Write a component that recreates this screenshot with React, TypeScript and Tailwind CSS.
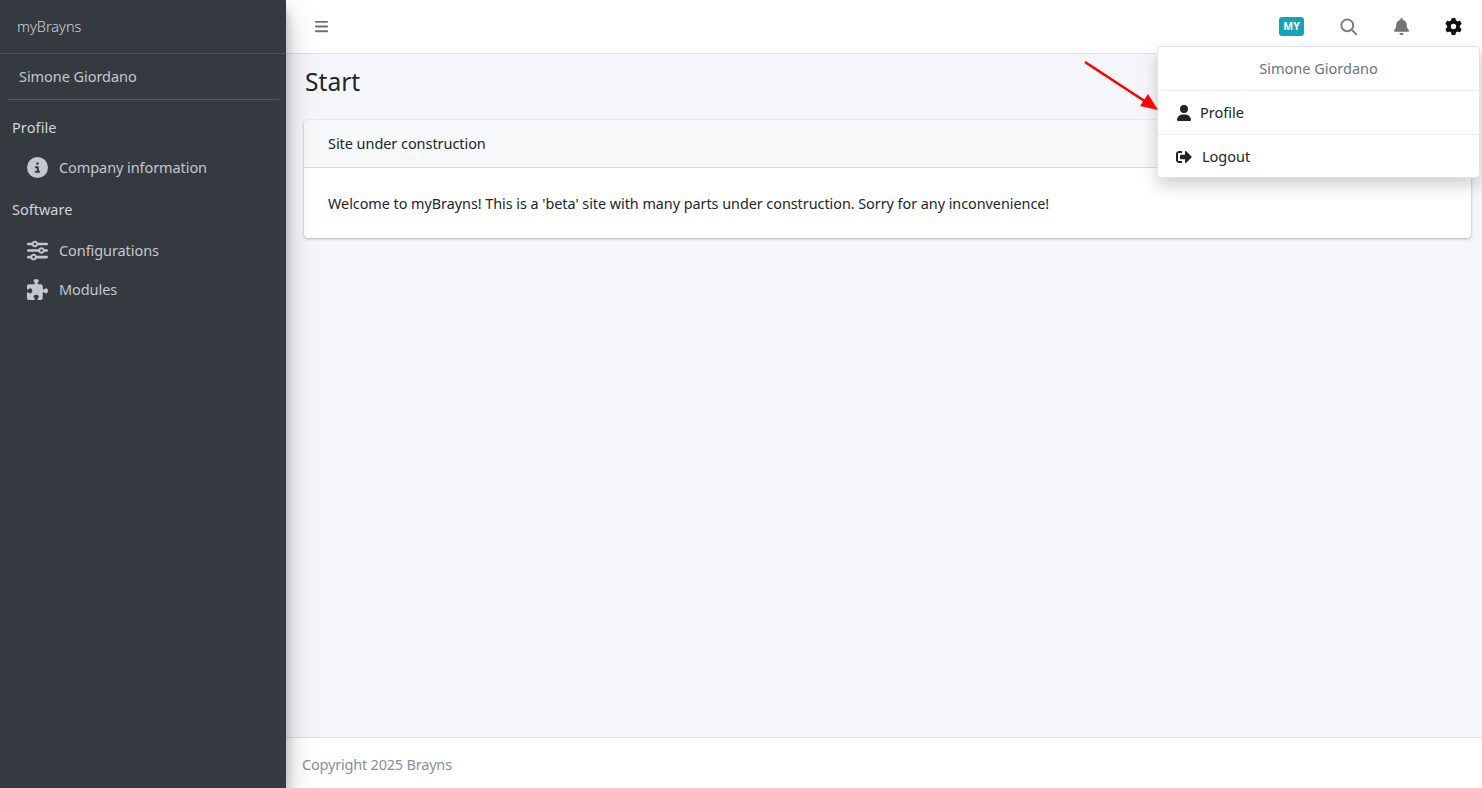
import {FaBars, FaBell, FaCircleInfo, FaGear, FaPuzzlePiece, FaSliders, FaUser} from "react-icons/fa6";
import {FaSignOutAlt} from "react-icons/fa";

const font = {fontFamily: '"Noto Sans", sans-serif'};

function NavItem({icon, label}: { icon: React.ReactNode, label: string }) {
  return (
    <div className="flex h-[39px] items-center pl-[27px] text-[#c2c7d0]">
      <span className="flex w-[21px] justify-center text-[21px]">{icon}</span>
      <span className="ml-[11px] text-[14.5px] tracking-[-0.08px]">{label}</span>
    </div>
  );
}

export default function App() {
  return (
    <div style={font} className="relative flex h-[788px] w-[1482px] overflow-hidden bg-[#f4f6f9] text-[14.5px] text-[#212529]">
      <aside className="z-10 w-[286px] shrink-0 bg-[#343a40] shadow-[0_14px_28px_rgba(0,0,0,0.25),0_10px_10px_rgba(0,0,0,0.22)]">
        <div className="flex h-[54px] items-center border-b border-[#4b545c] pl-[17px] font-light text-[#d1d5db]">myBrayns</div>
        <div className="mx-[7px] flex h-[46px] items-center border-b border-[#4f5962] pl-[12px] tracking-[-0.06px] text-[#c2c7d0]">Simone Giordano</div>
        <div className="pl-[12px] pt-[17px] pb-[11px] leading-[20px] tracking-[0.1px] text-[#d0d4db]">Profile</div>
        <NavItem icon={<FaCircleInfo />} label="Company information" />
        <div className="pl-[12px] pt-[12px] pb-[12px] leading-[20px] text-[#d0d4db]">Software</div>
        <NavItem icon={<FaSliders />} label="Configurations" />
        <NavItem icon={<FaPuzzlePiece />} label="Modules" />
      </aside>

      <div className="flex min-w-0 flex-1 flex-col">
        <header className="flex h-[54px] shrink-0 items-center border-b border-[#dee2e6] bg-white pl-[28px] pr-[20px] text-[#6c757d]">
          <FaBars className="text-[15px] text-[#6b7177]" />
          <div className="ml-auto flex items-center">
            <span className="flex h-[19px] w-[25px] items-center justify-center rounded-[3px] bg-[#17a2b8] text-[10.5px] font-bold text-white">MY</span>
            <svg className="ml-[36px]" width="18" height="18" viewBox="0 0 18 18" fill="none" stroke="#7a7f85" strokeWidth="2">
              <circle cx="7.3" cy="7.3" r="5.9" />
              <line x1="11.6" y1="11.6" x2="16.8" y2="16.8" />
            </svg>
            <FaBell className="ml-[35px] text-[17px] text-[#757575]" />
            <FaGear className="ml-[35px] text-[17px] text-[#111]" />
          </div>
        </header>

        <main className="flex-1 pl-[18px] pr-[11px]">
          <h1 className="pl-[1px] pt-[11px] text-[24.6px] leading-[34px] text-[#212529]">Start</h1>
          <section className="mt-[21px] overflow-hidden rounded-[4px] bg-white shadow-[0_0_1px_rgba(0,0,0,0.2),0_1px_3px_rgba(0,0,0,0.25)]">
            <div className="flex h-[48px] items-center border-b border-[#d9dadc] bg-[#f7f8fa] pl-[24px] tracking-[-0.06px]">Site under construction</div>
            <p className="flex h-[70px] items-center pl-[24px] pt-[1px] text-[14.4px] tracking-[-0.04px]">Welcome to myBrayns! This is a 'beta' site with many parts under construction. Sorry for any inconvenience!</p>
          </section>
        </main>

        <footer className="flex h-[51px] shrink-0 items-center border-t border-[#dee2e6] bg-white pl-[16px] pt-[3px] tracking-[-0.2px] text-[#869099]">Copyright 2025 Brayns</footer>
      </div>

      <div className="absolute left-[1157px] top-[46px] z-20 w-[323px] rounded-[4px] border border-[#e1e3e5] bg-white shadow-[0_8px_16px_rgba(0,0,0,0.18)]">
        <div className="flex h-[44px] items-center justify-center border-b border-[#e9ecef] text-[#6c757d]">Simone Giordano</div>
        <div className="flex h-[44px] items-center border-b border-[#e9ecef] pl-[18px]">
          <FaUser className="text-[16px] text-[#212529]" />
          <span className="ml-[8px]">Profile</span>
        </div>
        <div className="flex h-[42px] items-center pl-[18px] pt-[2px]">
          <FaSignOutAlt className="text-[16px] text-[#212529]" />
          <span className="ml-[10px]">Logout</span>
        </div>
      </div>

      <svg className="absolute left-[1080px] top-[58px] z-30" width="84" height="58" viewBox="0 0 84 58">
        <line x1="5" y1="4" x2="66" y2="44" stroke="#ff0000" strokeWidth="2.6" />
        <polygon points="78,52 60,48 68,36" fill="#ff0000" />
      </svg>
    </div>
  );
}
